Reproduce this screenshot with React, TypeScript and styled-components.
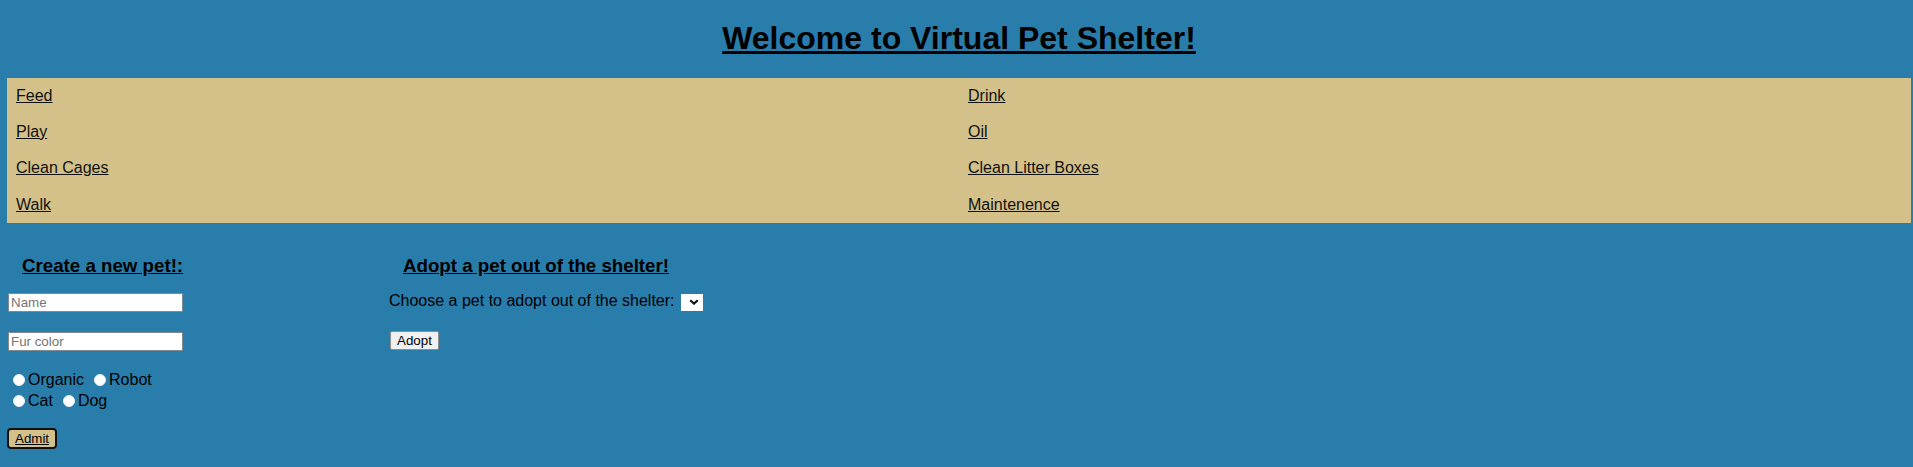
import React from "react";
import styled, { createGlobalStyle } from "styled-components";

const GlobalStyle = createGlobalStyle`
  html, body {
    margin: 0;
    padding: 0;
    background: #297dab;
  }
  body {
    font-family: "Liberation Sans", Arial, sans-serif;
    color: #000;
  }
`;

const Page = styled.div`
  min-height: 467px;
  padding: 0 2px 0 7px;
  background: #297dab;
`;

const Title = styled.h1`
  margin: 19.5px 0 21px;
  font-size: 32px;
  font-weight: bold;
  line-height: normal;
  text-align: center;
  text-decoration: underline;
  color: #000;
`;

const Nav = styled.nav`
  display: grid;
  grid-template-columns: 1fr 1fr;
  background: #d4c18a;
`;

const NavCell = styled.div`
  padding: 9px;
  font-size: 16px;
  line-height: 18.4px;
`;

const NavLink = styled.a`
  color: #111;
  text-decoration: underline;
`;

const Bottom = styled.div`
  display: flex;
  align-items: flex-start;
  padding-left: 1px;
`;

const Column = styled.div<{ $width?: number }>`
  display: flex;
  flex-direction: column;
  align-items: flex-start;
  width: ${(p) => (p.$width ? `${p.$width}px` : "auto")};
`;

const SectionHeading = styled.h3`
  margin: 31.5px 0 16px 14px;
  font-size: 18.72px;
  font-weight: bold;
  line-height: normal;
  text-decoration: underline;
  color: #000;
`;

const TextInput = styled.input`
  box-sizing: border-box;
  width: 175px;
  height: 19px;
  margin: 0;
  padding: 1px 2px;
  border: 1px solid #7f8a92;
  background: #fff;
  font-family: "Liberation Sans", Arial, sans-serif;
  font-size: 13.33px;
  outline: none;
  & + & {
    margin-top: 20px;
  }
  &::placeholder {
    color: #757575;
  }
`;

const RadioGroup = styled.div`
  margin-top: 19px;
  display: flex;
  flex-direction: column;
`;

const RadioRow = styled.div`
  display: flex;
  align-items: center;
  height: 21px;
  font-size: 16px;
`;

const RadioLabel = styled.label`
  display: inline-flex;
  align-items: center;
  margin-right: 5px;
  color: #000;
`;

const Radio = styled.input`
  appearance: none;
  box-sizing: border-box;
  width: 12px;
  height: 12px;
  margin: 0 3px 0 5px;
  border-radius: 50%;
  border: 1px solid #e9eef2;
  background: #fff;
`;

const AdmitButton = styled.button`
  box-sizing: border-box;
  height: 21px;
  margin: 16px 0 0 -1px;
  padding: 1px 6px;
  border: 2px solid #111;
  border-radius: 4px;
  background: #d4c18a;
  font-family: "Liberation Sans", Arial, sans-serif;
  font-size: 13.33px;
  text-decoration: underline;
  color: #000;
`;

const ChooseRow = styled.div`
  display: flex;
  align-items: center;
  height: 18px;
  margin-top: -1px;
  font-size: 16px;
  color: #000;
`;

const SelectWrap = styled.span`
  position: relative;
  display: inline-block;
  width: 22px;
  height: 17px;
  margin-left: 6px;
  margin-top: 1px;
`;

const Select = styled.select`
  appearance: none;
  box-sizing: border-box;
  width: 22px;
  height: 17px;
  margin: 0;
  padding: 0;
  border: none;
  background: #fff;
  border-radius: 0;
`;

const Chevron = styled.svg`
  position: absolute;
  left: 8px;
  top: 6px;
  pointer-events: none;
`;

const AdoptButton = styled.button`
  box-sizing: border-box;
  height: 19px;
  margin: 21px 0 0 1px;
  padding: 1px 6px;
  border: 1px solid #8f8f8f;
  border-radius: 2px;
  background: #f0f0f0;
  font-family: "Liberation Sans", Arial, sans-serif;
  font-size: 13.33px;
  line-height: 15px;
  color: #000;
`;

const links = [
  "Feed",
  "Drink",
  "Play",
  "Oil",
  "Clean Cages",
  "Clean Litter Boxes",
  "Walk",
  "Maintenence",
];

export default function App() {
  return (
    <>
      <GlobalStyle />
      <Page>
        <Title>Welcome to Virtual Pet Shelter!</Title>
        <Nav>
          {links.map((l) => (
            <NavCell key={l}>
              <NavLink href="#">{l}</NavLink>
            </NavCell>
          ))}
        </Nav>
        <Bottom>
          <Column $width={381}>
            <SectionHeading>Create a new pet!:</SectionHeading>
            <TextInput placeholder="Name" />
            <TextInput placeholder="Fur color" />
            <RadioGroup>
              <RadioRow>
                <RadioLabel>
                  <Radio type="radio" name="kind" />
                  Organic
                </RadioLabel>
                <RadioLabel>
                  <Radio type="radio" name="kind" />
                  Robot
                </RadioLabel>
              </RadioRow>
              <RadioRow>
                <RadioLabel>
                  <Radio type="radio" name="species" />
                  Cat
                </RadioLabel>
                <RadioLabel>
                  <Radio type="radio" name="species" />
                  Dog
                </RadioLabel>
              </RadioRow>
            </RadioGroup>
            <AdmitButton>Admit</AdmitButton>
          </Column>
          <Column>
            <SectionHeading>Adopt a pet out of the shelter!</SectionHeading>
            <ChooseRow>
              Choose a pet to adopt out of the shelter:
              <SelectWrap>
                <Select />
                <Chevron width="10" height="6" viewBox="0 0 10 6">
                  <path
                    d="M1.2 1.2 L5 4.6 L8.8 1.2"
                    fill="none"
                    stroke="#111"
                    strokeWidth="2.2"
                  />
                </Chevron>
              </SelectWrap>
            </ChooseRow>
            <AdoptButton>Adopt</AdoptButton>
          </Column>
        </Bottom>
      </Page>
    </>
  );
}
